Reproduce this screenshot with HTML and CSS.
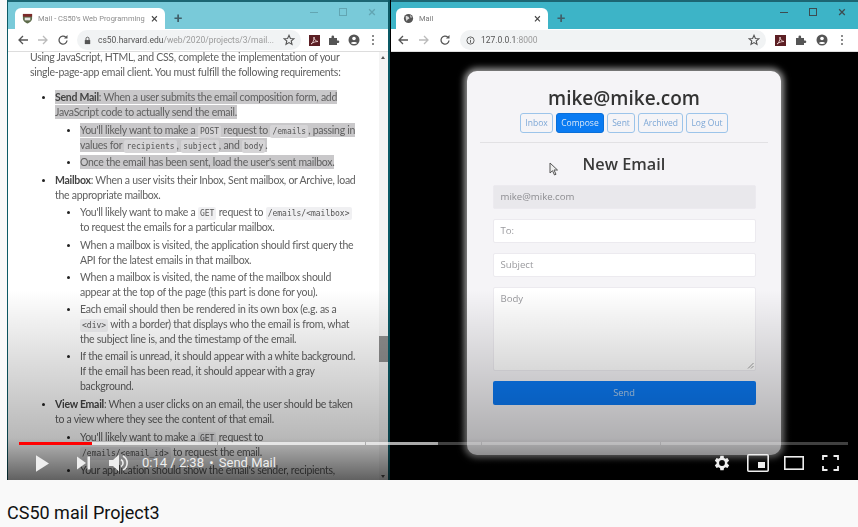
FILE: index.html
```html
<!DOCTYPE html>
<html lang="en">
<head>
<meta charset="utf-8">
<title>CS50 mail Project3</title>
<link rel="stylesheet" href="styles.css">
</head>
<body>
<main class="player">
  <div class="desktop">
    <section class="win win-left">
      <header class="tabbar">
        <div class="tab">
          <svg class="favicon" viewBox="0 0 12 12"><path d="M1 1h10v5c0 3-3 4.500-5 5.500C4 10.500 1 9 1 6z" fill="#5d6b4a"/><path d="M1 1h10v3H1z" fill="#7d2a2a"/><path d="M3 5h6v3H3z" fill="#e4e4e4"/></svg>
          <span class="tab-title fade">Mail - CS50's Web Programming</span>
          <span class="tab-x">×</span>
        </div>
        <span class="newtab">+</span>
        <div class="winctl light"><i class="min"></i><i class="max"></i><span class="close">×</span></div>
      </header>
      <div class="toolbar">
        <svg class="nav" viewBox="0 0 12 12"><path d="M11 6H2M6 2L2 6l4 4" fill="none" stroke="#555" stroke-width="1.300"/></svg>
        <svg class="nav" viewBox="0 0 12 12"><path d="M1 6h9M6 2l4 4-4 4" fill="none" stroke="#bbb" stroke-width="1.300"/></svg>
        <svg class="nav" viewBox="0 0 12 12"><path d="M10 6.500A4 4 0 1 1 8.800 3.200" fill="none" stroke="#555" stroke-width="1.300"/><path d="M10.500 1v3.500H7z" fill="#555"/></svg>
        <div class="omni">
          <svg class="lock" viewBox="0 0 10 10"><path d="M2 4.500h6V9H2z" fill="#555"/><path d="M3.300 4.500V3a1.700 1.700 0 0 1 3.400 0v1.500" fill="none" stroke="#555"/></svg>
          <span class="url"><b>cs50.harvard.edu</b>/web/2020/projects/3/mail...</span>
          <svg class="star" viewBox="0 0 12 12"><path d="M6 1.300l1.400 3.200 3.400.3-2.600 2.200.8 3.400L6 8.600l-3 1.800.8-3.400L1.200 4.800l3.400-.3z" fill="none" stroke="#555" stroke-width="1.100"/></svg>
        </div>
        <svg class="ext" viewBox="0 0 11 11"><rect width="11" height="11" fill="#5c1f24"/><path d="M2 9c2-1 3-4 3-7 0 3 2 4 4 4.500-3 0-5 1-7 2.500z" fill="none" stroke="#e9cfcf" stroke-width=".9"/></svg>
        <svg class="tool" viewBox="0 0 12 12"><path d="M1 4h2.500V2.800a1.300 1.300 0 0 1 2.600 0V4H9v2.500h1a1.300 1.300 0 0 1 0 2.600H9V11H1z" fill="#555"/></svg>
        <svg class="tool" viewBox="0 0 12 12"><circle cx="6" cy="6" r="5.500" fill="#555"/><circle cx="6" cy="4.500" r="1.800" fill="#fff"/><path d="M2.800 9c.8-1.500 5.600-1.500 6.400 0-1.500 1.400-4.900 1.400-6.400 0z" fill="#fff"/></svg>
        <span class="dots"><i></i><i></i><i></i></span>
      </div>
      <article class="doc">
        <p class="intro">Using JavaScript, HTML, and CSS, complete the implementation of your<br>single-page-app email client. You must fulfill the following requirements:</p>
        <ul class="l1">
          <li><span class="sel"><strong>Send Mail</strong>: When a user submits the email composition form, add</span><br><span class="sel">JavaScript code to actually send the email.</span>
            <ul class="l2">
              <li><span class="sel">You'll likely want to make a <code>POST</code> request to <code>/emails</code>, passing in</span><br><span class="sel">values for <code>recipients</code>, <code>subject</code>, and <code>body</code>.</span></li>
              <li><span class="sel">Once the email has been sent, load the user's sent mailbox.</span></li>
            </ul>
          </li>
          <li><strong>Mailbox</strong>: When a user visits their Inbox, Sent mailbox, or Archive, load<br>the appropriate mailbox.
            <ul class="l2">
              <li>You'll likely want to make a <code>GET</code> request to <code>/emails/&lt;mailbox&gt;</code><br>to request the emails for a particular mailbox.</li>
              <li>When a mailbox is visited, the application should first query the<br>API for the latest emails in that mailbox.</li>
              <li>When a mailbox is visited, the name of the mailbox should<br>appear at the top of the page (this part is done for you).</li>
              <li>Each email should then be rendered in its own box (e.g. as a<br><code>&lt;div&gt;</code> with a border) that displays who the email is from, what<br>the subject line is, and the timestamp of the email.</li>
              <li>If the email is unread, it should appear with a white background.<br>If the email has been read, it should appear with a gray<br>background.</li>
            </ul>
          </li>
          <li><strong>View Email</strong>: When a user clicks on an email, the user should be taken<br>to a view where they see the content of that email.
            <ul class="l2">
              <li>You'll likely want to make a <code>GET</code> request to<br><code>/emails/&lt;email_id&gt;</code> to request the email.</li>
              <li>Your application should show the email's sender, recipients,</li>
            </ul>
          </li>
        </ul>
        <div class="scrollbar"><i class="arrow-up"></i><i class="thumb"></i><i class="arrow-down"></i></div>
      </article>
    </section>
    <section class="win win-right">
      <header class="tabbar">
        <div class="tab tab-r">
          <svg class="favicon" viewBox="0 0 12 12"><circle cx="6" cy="6" r="5" fill="#555"/><path d="M3 3l3 1 1 2-2 1-1 2-1-3zM8 2l2 3-2 0z" fill="#ddd"/></svg>
          <span class="tab-title">Mail</span>
          <span class="tab-x">×</span>
        </div>
        <span class="newtab">+</span>
        <div class="winctl"><i class="min"></i><i class="max"></i><span class="close">×</span></div>
      </header>
      <div class="toolbar">
        <svg class="nav" viewBox="0 0 12 12"><path d="M11 6H2M6 2L2 6l4 4" fill="none" stroke="#555" stroke-width="1.300"/></svg>
        <svg class="nav" viewBox="0 0 12 12"><path d="M1 6h9M6 2l4 4-4 4" fill="none" stroke="#bbb" stroke-width="1.300"/></svg>
        <svg class="nav" viewBox="0 0 12 12"><path d="M10 6.500A4 4 0 1 1 8.800 3.200" fill="none" stroke="#555" stroke-width="1.300"/><path d="M10.500 1v3.500H7z" fill="#555"/></svg>
        <div class="omni">
          <svg class="lock" viewBox="0 0 10 10"><circle cx="5" cy="5" r="4" fill="none" stroke="#555"/><path d="M5 4.500V7.500M5 2.500v1" stroke="#555"/></svg>
          <span class="url"><b>127.0.0.1</b>:8000</span>
          <svg class="star" viewBox="0 0 12 12"><path d="M6 1.300l1.400 3.200 3.400.3-2.600 2.200.8 3.400L6 8.600l-3 1.800.8-3.400L1.200 4.800l3.400-.3z" fill="none" stroke="#555" stroke-width="1.100"/></svg>
        </div>
        <svg class="ext" viewBox="0 0 11 11"><rect width="11" height="11" fill="#5c1f24"/><path d="M2 9c2-1 3-4 3-7 0 3 2 4 4 4.500-3 0-5 1-7 2.500z" fill="none" stroke="#e9cfcf" stroke-width=".9"/></svg>
        <svg class="tool" viewBox="0 0 12 12"><path d="M1 4h2.500V2.800a1.300 1.300 0 0 1 2.600 0V4H9v2.500h1a1.300 1.300 0 0 1 0 2.600H9V11H1z" fill="#555"/></svg>
        <svg class="tool" viewBox="0 0 12 12"><circle cx="6" cy="6" r="5.500" fill="#555"/><circle cx="6" cy="4.500" r="1.800" fill="#fff"/><path d="M2.800 9c.8-1.500 5.600-1.500 6.400 0-1.500 1.400-4.900 1.400-6.400 0z" fill="#fff"/></svg>
        <span class="dots"><i></i><i></i><i></i></span>
      </div>
      <div class="stage">
        <div class="card">
          <h1>mike@mike.com</h1>
          <nav class="btns">
            <span class="btn">Inbox</span>
            <span class="btn on">Compose</span>
            <span class="btn">Sent</span>
            <span class="btn">Archived</span>
            <span class="btn">Log Out</span>
          </nav>
          <hr class="rule">
          <h2>New Email</h2>
          <form class="form">
            <div class="field disabled">mike@mike.com</div>
            <div class="field">To:</div>
            <div class="field">Subject</div>
            <div class="field area">Body
              <svg class="grip" viewBox="0 0 7 7"><path d="M1 6.500L6.500 1M4 6.500L6.500 4" stroke="#888" stroke-width=".8"/></svg>
            </div>
            <div class="send">Send</div>
          </form>
          <svg class="cursor" viewBox="0 0 10 14"><path d="M1 1v10l2.500-2.300L5.500 13l1.500-.7-2-4.300H8.500z" fill="#eee" stroke="#555"/></svg>
        </div>
      </div>
    </section>
    <div class="shade"></div>
  </div>
  <div class="controls">
    <div class="progress">
      <i class="seg s1"><b class="played"></b></i><i class="seg s2"></i><i class="seg s3"><b class="buffered"></b></i><i class="seg s4"></i><i class="seg s5"></i>
    </div>
    <div class="ctlrow">
      <svg class="ic play" viewBox="0 0 14 18"><path d="M0 0l14 9-14 9z" fill="#eee"/></svg>
      <svg class="ic next" viewBox="0 0 13 13"><path d="M0 0l9 6.500-9 6.500z" fill="#eee"/><path d="M10.500 0H13v13h-2.500z" fill="#eee"/></svg>
      <svg class="ic vol" viewBox="0 0 19 18"><path d="M0 6h4l6-5.500v17L4 12H0z" fill="#eee"/><path d="M12 5.500a4 4 0 0 1 0 7" fill="none" stroke="#eee" stroke-width="1.600"/><path d="M14 2a8 8 0 0 1 0 14" fill="none" stroke="#eee" stroke-width="1.600"/></svg>
      <span class="time">0:14 / 2:38 <span class="dot">•</span> Send Mail</span>
      <span class="spacer"></span>
      <svg class="ic gear" viewBox="0 0 24 24"><path fill="#eee" d="M19.400 13a7.500 7.500 0 0 0 0-2l2.100-1.600-2-3.500-2.500 1a7.500 7.500 0 0 0-1.700-1L15 3.200h-4l-.4 2.700a7.500 7.500 0 0 0-1.700 1l-2.500-1-2 3.500L6.500 11a7.500 7.500 0 0 0 0 2l-2.100 1.600 2 3.500 2.500-1a7.500 7.500 0 0 0 1.700 1l.4 2.700h4l.4-2.700a7.500 7.500 0 0 0 1.700-1l2.500 1 2-3.500zM13 15.500a3.500 3.500 0 1 1 0-7 3.500 3.500 0 0 1 0 7z" transform="translate(-1)"/></svg>
      <svg class="ic mini" viewBox="0 0 22 18"><rect x=".8" y=".8" width="20.400" height="16.400" rx="1" fill="none" stroke="#eee" stroke-width="1.600"/><rect x="11" y="8" width="7" height="6" fill="#eee"/></svg>
      <svg class="ic theater" viewBox="0 0 20 14"><rect x=".8" y=".8" width="18.400" height="12.400" fill="none" stroke="#eee" stroke-width="1.600"/></svg>
      <svg class="ic full" viewBox="0 0 17 16"><path d="M1 5V1h4.500M11.500 1H16v4M16 11v4h-4.500M5.500 15H1v-4" fill="none" stroke="#eee" stroke-width="1.800"/></svg>
    </div>
  </div>
</main>
<h3 class="title">CS50 mail Project3</h3>
</body>
</html>
```
FILE: styles.css
```css
* { box-sizing: border-box; }
html, body { margin: 0; padding: 0; height: 527px; overflow: hidden; background: #f9f9f9; }
body { font-family: "Lato", "Noto Sans", sans-serif; }
.player { position: relative; margin-left: 7px; height: 480px; background: #000; overflow: hidden; }
.desktop { display: flex; height: 480px; filter: blur(.45px); }
.win { display: flex; flex-direction: column; height: 480px; }
.win-left { width: 383px; flex: none; border-left: 1px solid #0c5a66; border-right: 2px solid #0c5a66; }
.win-right { flex: 1; margin-left: 1px; min-width: 0; }
.tabbar { display: flex; align-items: flex-end; height: 29px; flex: none; padding-left: 7px; border-top: 2px solid #1c6673; }
.win-left .tabbar { background: #79cad9; }
.win-right .tabbar { background: #3db4c7; padding-left: 5px; }
.tab { width: 150px; height: 21px; background: #fff; border-radius: 6px 6px 0 0; display: flex; align-items: center; padding: 0 7px 0 7px; gap: 5px; }
.tab-r { width: 152px; padding-right: 7px; }
.favicon { width: 11px; height: 11px; flex: none; }
.tab-title { font: 7.500px "Roboto", sans-serif; color: #777; flex: 1; min-width: 0; white-space: nowrap; }
.fade { color: #8c8c8c; }
.tab-x { font: 13px "Roboto", sans-serif; color: #444; line-height: 12px; flex: none; }
.newtab { font: 500 15px "Roboto", sans-serif; color: #40606a; margin-left: 9px; padding-bottom: 2px; line-height: 17px; }
.winctl { margin-left: auto; align-self: flex-start; display: flex; align-items: center; gap: 21px; padding: 5px 12px 0 0; color: #3d4c50; }
.win-left .winctl { padding-right: 12px; gap: 21px; }
.winctl.light { color: #62a5b2; }
.winctl .min { width: 8px; height: 1px; background: currentColor; }
.winctl .max { width: 8px; height: 8px; border: 1px solid currentColor; }
.winctl .close { font: 15px/10px "Roboto", sans-serif; }
.toolbar { display: flex; align-items: center; height: 23px; flex: none; background: #fff; gap: 8px; border-bottom: 1px solid #ddd; position: relative; z-index: 1; }
.win-left .toolbar { padding: 0 13px 0 9px; }
.win-right .toolbar { padding: 0 14px 0 6px; gap: 9px; }
.nav { width: 12px; height: 12px; flex: none; }
.omni { flex: 1; min-width: 0; height: 20px; border-radius: 10px; background: #f1f3f4; display: flex; align-items: center; padding: 0 6px 0 6px; gap: 6px; }
.lock { width: 9px; height: 9px; flex: none; }
.url { font: 8.500px "Roboto", sans-serif; color: #9a9a9a; flex: 1; white-space: nowrap; }
.url b { font-weight: 400; color: #555; }
.star { width: 12px; height: 12px; flex: none; }
.ext { width: 11px; height: 11px; flex: none; }
.tool { width: 12px; height: 12px; flex: none; }
.dots { display: flex; flex-direction: column; gap: 2px; width: 3px; margin-left: 4px; }
.dots i { width: 2px; height: 2px; background: #666; border-radius: 50%; }

.doc { position: relative; flex: 1; background: #fff; overflow: hidden; padding: 0 0 0 22px; font-size: 10.500px; letter-spacing: -.27px; line-height: 15px; color: #606060; white-space: nowrap; }
.intro { margin: -2px 0 10px; }
.doc ul { margin: 0; padding: 0; }
.doc li { list-style: disc; }
.l1 { padding-left: 25px !important; }
.l1 > li { margin-bottom: 3px; }
.l2 { padding-left: 25px !important; margin-top: 3px !important; }
.l1 > li:nth-child(2) > .l2 { margin-top: 2px !important; }
.l2 > li { margin-bottom: 2.300px; }
.doc li::marker { color: #222; font-size: 9px; }
.doc strong { color: #444; font-weight: 700; }
.sel { background: #c9c8ca; padding: 1px 0; -webkit-box-decoration-break: clone; box-decoration-break: clone; }
.doc code { font-family: "DejaVu Sans Mono", monospace; font-size: 8px; line-height: 1; letter-spacing: 0; background: #f0f0f2; border-radius: 2px; padding: 2px 2px; color: #555; }
.sel code { background: #d6d5d7; }
.scrollbar { position: absolute; right: 0; top: 0; bottom: 0; width: 9px; background: #f4f4f4; }
.thumb { position: absolute; top: 284px; left: 0; width: 9px; height: 26px; background: #8f8f8f; }
.arrow-up { position: absolute; top: 4px; left: 2px; border: 2.500px solid transparent; border-top: 0; border-bottom: 3px solid #555; }
.arrow-down { position: absolute; bottom: 2px; left: 2px; border: 2.500px solid transparent; border-bottom: 0; border-top: 3px solid #555; }

.stage { flex: 1; background: #000; display: flex; justify-content: center; align-items: flex-start; padding: 19px 0 0 0; min-height: 0; }
.card { position: relative; width: 314px; height: 384px; margin-left: -1px; background: #f5f4f7; border-radius: 10px; box-shadow: 0 0 6px 3px rgba(200,200,200,.75); padding: 15px 13px 0; display: flex; flex-direction: column; align-items: center; color: #333; }
.card h1 { margin: 0; font: 600 19px/24px "Open Sans", sans-serif; color: #333; }
.btns { display: flex; gap: 2.500px; margin-top: 3px; }
.btn { height: 20px; padding: 0 4.500px; border: 1px solid #9cc4ea; border-radius: 3px; font: 8.500px/18px "Open Sans", sans-serif; color: #7da7d6; }
.btn.on { background: #0a7bf2; color: #dbe9f7; border-color: #0a6fd8; }
.rule { width: 288px; height: 1px; border: 0; background: #e2e1e4; margin: 9px 0 0; flex: none; }
.card h2 { margin: 10px 0 0; font: 600 16.300px/23px "Open Sans", sans-serif; color: #3a3a3a; }
.form { width: 263px; display: flex; flex-direction: column; gap: 10px; margin-top: 9px; }
.field { position: relative; height: 24px; background: #fff; border-radius: 2px; border: 1px solid #eceaef; padding: 0 7px; font: 9.600px/22px "Open Sans", sans-serif; color: #9a9a9e; }
.disabled { background: #e9e8ec; color: #8c8c90; }
.area { height: 84px; }
.grip { position: absolute; right: 1px; bottom: 1px; width: 7px; height: 7px; }
.send { height: 24px; background: #0b7af5; border-radius: 2px; font: 9.300px/24px "Open Sans", sans-serif; text-align: center; color: #b4d2ef; }
.cursor { position: absolute; left: 82px; top: 91px; width: 10px; height: 14px; }

.shade { position: absolute; left: 0; right: 0; top: 290px; height: 190px; background: linear-gradient(to bottom, rgba(0,0,0,0) 0%, rgba(0,0,0,.28) 78%, rgba(0,0,0,.62) 100%); }
.controls { position: absolute; left: 12px; right: 10px; top: 442px; height: 38px; }
.progress { display: flex; height: 3px; gap: 1px; }
.seg { position: relative; display: block; height: 3px; background: rgba(255,255,255,.25); }
.played { position: absolute; left: 0; top: 0; height: 3px; width: 73px; background: #f00; }
.buffered { position: absolute; left: 0; top: 0; height: 3px; width: 72px; background: rgba(255,255,255,.55); }
.s1 { width: 198px; background: rgba(240,240,240,.85); }
.s2 { width: 147px; background: rgba(240,240,240,.85); }
.s3 { width: 115px; }
.s4 { width: 178px; }
.s5 { flex: 1; }
.ctlrow { display: flex; align-items: center; height: 35px; padding-top: 1px; }
.ic { flex: none; display: block; }
.play { width: 13px; height: 19px; margin-left: 17px; }
.next { width: 13px; height: 14px; margin-left: 28px; }
.vol { width: 19px; height: 18px; margin-left: 19px; }
.time { font: 13px "Roboto", sans-serif; color: #eee; margin: 0 0 1px 14px; white-space: nowrap; }
.time .dot { margin: 0 2px; }
.spacer { flex: 1; }
.gear { width: 20px; height: 20px; }
.mini { width: 22px; height: 18px; margin-left: 15px; }
.theater { width: 20px; height: 14px; margin-left: 15px; }
.full { width: 17px; height: 16px; margin-left: 18px; margin-right: 9px; }
.title { margin: 22px 0 0 7px; font: 400 18px/22px "Roboto", sans-serif; color: #111; }
```
